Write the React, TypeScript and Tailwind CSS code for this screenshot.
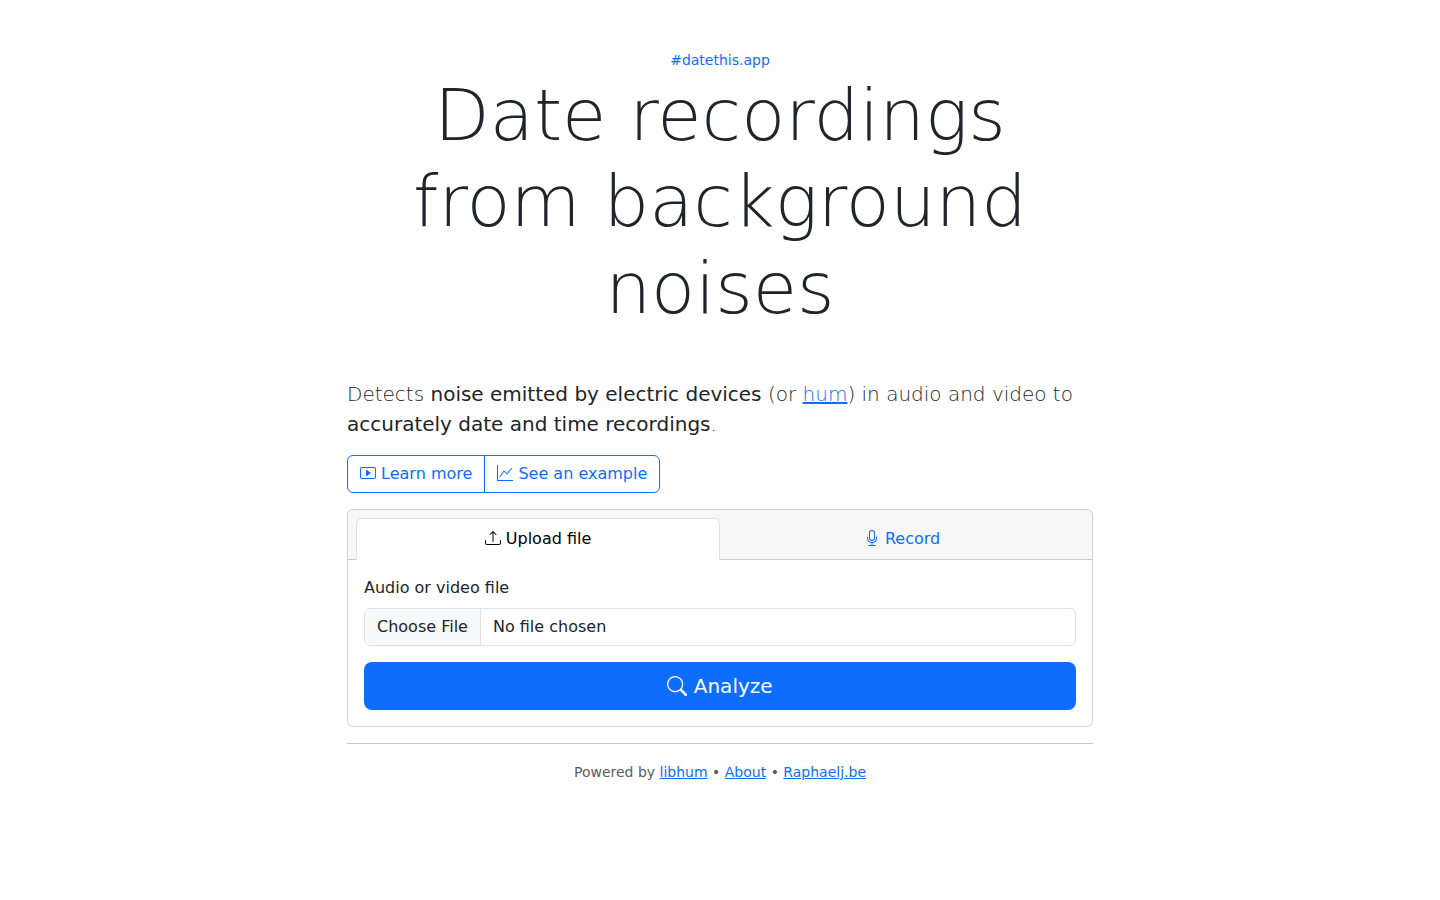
import React from "react";
import { BsPlayBtn, BsGraphUp, BsUpload, BsMic, BsSearch } from "react-icons/bs";

const link = "text-[#0d6efd] underline";
const icon = "inline-block align-[-0.125em]";

export default function App() {
  return (
    <div className="min-h-screen bg-white font-['DejaVu_Sans',sans-serif] text-base text-[#212529]">
      <main className="mx-auto max-w-[770px] px-3 pt-12">
        <header className="mb-12 text-center">
          <a href="#home" className="block text-sm leading-6 text-[#0d6efd]">
            #datethis.app
          </a>
          <h1 className="text-7xl leading-[1.2] font-extralight">
            Date recordings from background noises
          </h1>
        </header>

        <p className="mb-4 text-xl leading-[30px] font-extralight">
          Detects <strong className="font-normal">noise emitted by electric devices</strong> (or{" "}
          <a href="#hum" className={link}>hum</a>) in audio and video to{" "}
          <strong className="font-normal">accurately date and time recordings</strong>.
        </p>

        <div className="mb-4 flex w-fit rounded-md border border-[#0d6efd] text-[#0d6efd]">
          <button type="button" className="h-9 px-3 leading-6">
            <BsPlayBtn className={icon} aria-hidden="true" /> Learn more
          </button>
          <button type="button" className="h-9 border-l border-[#0d6efd] px-3 leading-6">
            <BsGraphUp className={icon} aria-hidden="true" /> See an example
          </button>
        </div>

        <section className="rounded-md border border-black/[0.175]">
          <div role="tablist" className="flex rounded-t-md border-b border-black/[0.175] bg-black/[0.03] px-2 pt-2">
            <button
              type="button"
              role="tab"
              aria-selected="true"
              className="-mb-px h-[42px] flex-1 rounded-t-md border border-[#dee2e6] border-b-white bg-white leading-6 text-black"
            >
              <BsUpload className={icon} aria-hidden="true" /> Upload file
            </button>
            <button
              type="button"
              role="tab"
              aria-selected="false"
              className="-mb-px h-[42px] flex-1 border border-transparent leading-6 text-[#0d6efd]"
            >
              <BsMic className={icon} aria-hidden="true" /> Record
            </button>
          </div>
          <form className="p-4" onSubmit={(e) => e.preventDefault()}>
            <label htmlFor="file" className="mb-2 block leading-6">
              Audio or video file
            </label>
            <input
              id="file"
              type="file"
              className="mb-4 block h-[38px] w-full overflow-hidden rounded-md border border-[#dee2e6] leading-6 file:mr-3 file:h-9 file:border-0 file:border-r file:border-solid file:border-[#dee2e6] file:bg-[#f8f9fa] file:px-3 file:text-[#212529]"
            />
            <button
              type="submit"
              className="h-12 w-full rounded-lg bg-[#0d6efd] text-xl leading-[30px] text-white"
            >
              <BsSearch className={icon} aria-hidden="true" /> Analyze
            </button>
          </form>
        </section>

        <hr className="my-4 border-[#c8c9ca]" />
        <footer className="text-center text-sm leading-6 text-[#595c5f]">
          Powered by <a href="#libhum" className={link}>libhum</a> •{" "}
          <a href="#about" className={link}>About</a> •{" "}
          <a href="#author" className={link}>Raphaelj.be</a>
        </footer>
      </main>
    </div>
  );
}
